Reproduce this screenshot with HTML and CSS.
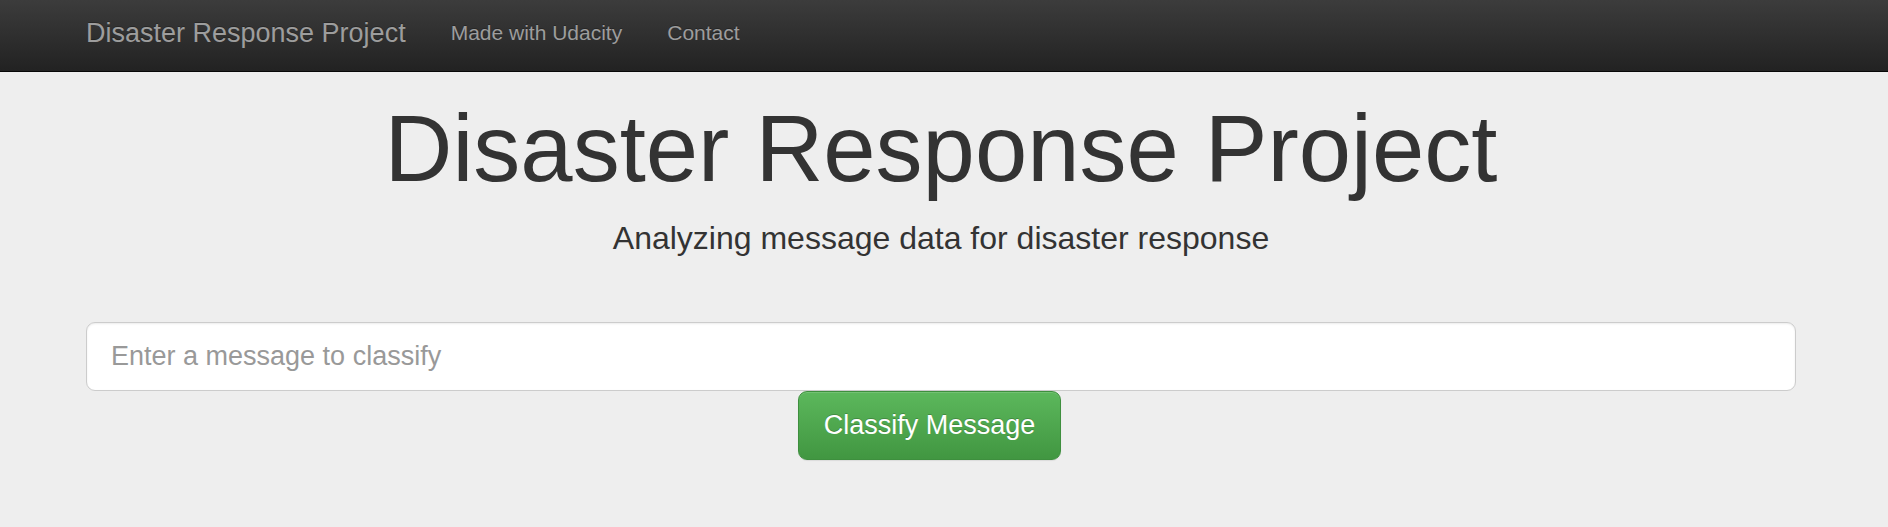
FILE: index.html
```html
<!DOCTYPE html>
<html lang="en">
<head>
  <meta charset="utf-8">
  <meta name="viewport" content="width=device-width, initial-scale=1">
  <title>Disasters</title>
  <link rel="stylesheet" href="styles.css">
</head>
<body>
  <nav class="navbar">
    <div class="container navbar-inner">
      <a class="navbar-brand" href="#">Disaster Response Project</a>
      <ul class="navbar-nav">
        <li><a href="#">Made with Udacity</a></li>
        <li><a href="#">Contact</a></li>
      </ul>
    </div>
  </nav>
  <main class="jumbotron">
    <div class="container">
      <h1 class="title">Disaster Response Project</h1>
      <p class="lead">Analyzing message data for disaster response</p>
      <form class="message-form">
        <input class="message-input" type="text" name="query" placeholder="Enter a message to classify" aria-label="Message to classify">
        <div class="form-actions">
          <button class="submit-button" type="submit">Classify Message</button>
        </div>
      </form>
    </div>
  </main>
</body>
</html>
```
FILE: styles.css
```css
* {
  box-sizing: border-box;
}

body {
  margin: 0;
  background: #eee;
  color: #333;
  font-family: Arial, "Liberation Sans", sans-serif;
}

.container {
  max-width: 1756px;
  margin: 0 auto;
  padding: 0 23px;
}

.navbar {
  min-height: 72px;
  padding-right: 6px;
  border-bottom: 1px solid #080808;
  background: linear-gradient(to bottom, #3c3c3c 0%, #222 100%);
}

.navbar-inner {
  display: flex;
  flex-wrap: wrap;
  align-items: center;
  column-gap: 45px;
}

.navbar a {
  color: #9d9d9d;
  text-decoration: none;
  text-shadow: 0 -1px 0 rgba(0, 0, 0, 0.25);
}

.navbar-brand {
  font-size: 27px;
  line-height: 66px;
}

.navbar-nav {
  display: flex;
  gap: 45px;
  margin: 0;
  padding: 0;
  list-style: none;
  font-size: 21px;
  line-height: 30px;
}

.jumbotron {
  padding: 25px 6px 67px 0;
  text-align: center;
}

.title {
  margin: 0 0 15px;
  font-size: 94px;
  font-weight: 500;
  line-height: 104px;
}

.lead {
  margin: 0 0 62px;
  font-size: 32px;
  line-height: 44px;
}

.message-input {
  display: block;
  width: 100%;
  height: 69px;
  padding: 0 24px;
  border: 1px solid #ccc;
  border-radius: 9px;
  background: #fff;
  box-shadow: inset 0 1px 2px rgba(0, 0, 0, 0.08);
  color: #555;
  font: inherit;
  font-size: 27px;
}

.message-input::placeholder {
  color: #999;
  opacity: 1;
}

.form-actions {
  padding-right: 23px;
}

.submit-button {
  height: 69px;
  padding: 0 25px;
  border: 1px solid #3e8f3e;
  border-radius: 9px;
  background: linear-gradient(to bottom, #5cb85c 0%, #419641 100%);
  box-shadow: inset 0 1px 0 rgba(255, 255, 255, 0.15), 0 1px 1px rgba(0, 0, 0, 0.08);
  color: #fff;
  font: inherit;
  font-size: 27px;
  text-shadow: 0 -1px 0 rgba(0, 0, 0, 0.2);
  cursor: pointer;
}
```
